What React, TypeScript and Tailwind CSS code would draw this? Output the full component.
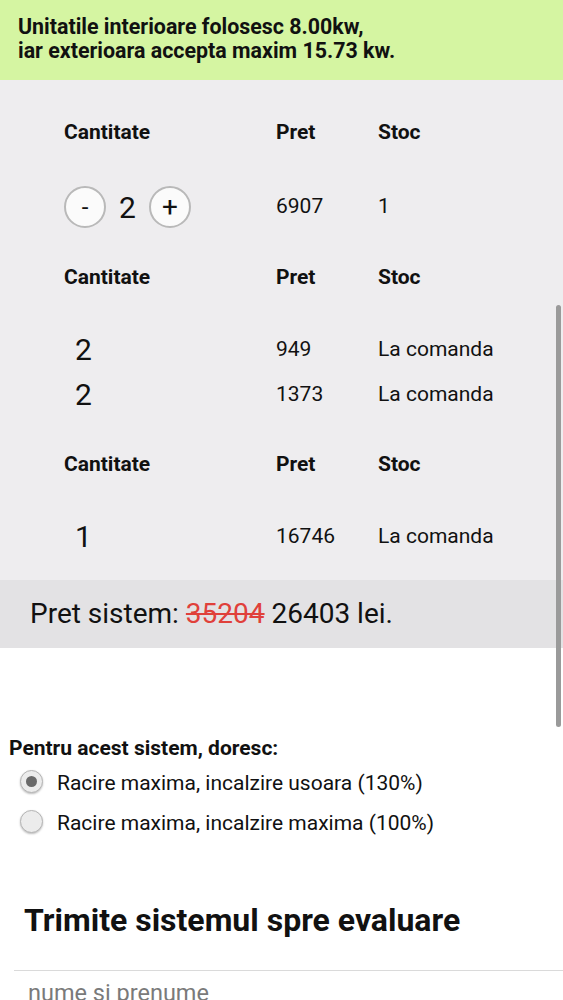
import React, { useState } from 'react';

type Row = { qty: number; price: string; stock: string; editable?: boolean };

const blocks: Row[][] = [
  [{ qty: 2, price: '6907', stock: '1', editable: true }],
  [
    { qty: 2, price: '949', stock: 'La comanda' },
    { qty: 2, price: '1373', stock: 'La comanda' },
  ],
  [{ qty: 1, price: '16746', stock: 'La comanda' }],
];

const HeaderRow: React.FC = () => (
  <div className="grid grid-cols-[212px_102px_1fr] h-[40px] items-center text-[21px] font-bold text-[#111]">
    <span>Cantitate</span>
    <span>Pret</span>
    <span>Stoc</span>
  </div>
);

const Radio: React.FC<{ checked: boolean }> = ({ checked }) => (
  <span className="w-[23px] h-[23px] rounded-full border border-[#b5b5b5] bg-[#ececec] shadow-[0_1px_2px_rgba(0,0,0,0.25)] flex items-center justify-center shrink-0">
    {checked && <span className="w-[11px] h-[11px] rounded-full bg-[#6a6a6a]" />}
  </span>
);

export default function App() {
  const [qty, setQty] = useState<number>(2);
  const [choice, setChoice] = useState<number>(0);

  return (
    <div className="relative w-[563px] h-[1000px] overflow-hidden bg-white text-[#111] font-['Roboto','Liberation_Sans',sans-serif]">
      {/* Power notice */}
      <div className="h-[80px] bg-[#d5f5a2] px-[18px] pt-[15px] text-[21.4px] font-bold leading-[24px]">
        <div>Unitatile interioare folosesc 8.00kw,</div>
        <div>iar exterioara accepta maxim 15.73 kw.</div>
      </div>

      {/* Product tables */}
      <div className="bg-[#eeedef] pl-[64px] pt-[33px] pb-[21px]">
        {blocks.map((rows, bi) => (
          <div key={bi} className={bi === 0 ? '' : bi === 1 ? 'mt-[26px]' : 'mt-[28px]'}>
            <HeaderRow />
            <div className="mt-[29px]">
              {rows.map((row, ri) =>
                row.editable ? (
                  <div key={ri} className="grid grid-cols-[212px_102px_1fr] h-[50px] items-center text-[21px]">
                    <div className="flex items-center">
                      <button
                        onClick={() => setQty(Math.max(1, qty - 1))}
                        className="w-[42px] h-[42px] rounded-full border-2 border-[#b9b9b9] bg-[#fbfbfb] text-[24px] flex items-center justify-center"
                      >
                        -
                      </button>
                      <span className="w-[43px] text-center text-[30px]">{qty}</span>
                      <button
                        onClick={() => setQty(qty + 1)}
                        className="w-[42px] h-[42px] rounded-full border-2 border-[#b9b9b9] bg-[#fbfbfb] text-[28px] flex items-center justify-center"
                      >
                        +
                      </button>
                    </div>
                    <span>{row.price}</span>
                    <span>{row.stock}</span>
                  </div>
                ) : (
                  <div key={ri} className="grid grid-cols-[212px_102px_1fr] h-[45px] items-center text-[21px]">
                    <span className="pl-[11px] text-[30px]">{row.qty}</span>
                    <span>{row.price}</span>
                    <span>{row.stock}</span>
                  </div>
                )
              )}
            </div>
          </div>
        ))}
      </div>

      {/* System price */}
      <div className="h-[68px] bg-[#e3e2e4] pl-[30px] flex items-center text-[28px]">
        Pret sistem:&nbsp;<span className="text-[#e0403a] line-through">35204</span>&nbsp;26403 lei.
      </div>

      {/* Options */}
      <div className="pt-[87px] pl-[9px]">
        <div className="text-[21px] font-bold leading-[26px]">Pentru acest sistem, doresc:</div>
        <div className="mt-[3px] pl-[11px]">
          {['Racire maxima, incalzire usoara (130%)', 'Racire maxima, incalzire maxima (100%)'].map((label, i) => (
            <label key={i} onClick={() => setChoice(i)} className="flex items-center h-[40px] cursor-pointer">
              <span className="-mt-[6px]">
                <Radio checked={choice === i} />
              </span>
              <span className="ml-[14px] text-[21px]">{label}</span>
            </label>
          ))}
        </div>
      </div>

      {/* Send form */}
      <div className="pl-[24px] mt-[54px] text-[32px] font-bold leading-[44px]">Trimite sistemul spre evaluare</div>
      <div className="ml-[14px] mt-[28px] border-t border-[#dadada]">
        <input
          placeholder="nume si prenume"
          className="w-full pl-[14px] pt-[5px] text-[23.5px] outline-none placeholder:text-[#7a7a7a] bg-transparent"
        />
      </div>

      {/* Overlay scrollbar */}
      <div className="absolute left-[556px] top-[305px] w-[5px] h-[422px] rounded-full bg-[#9a9a9a]" />
    </div>
  );
}
